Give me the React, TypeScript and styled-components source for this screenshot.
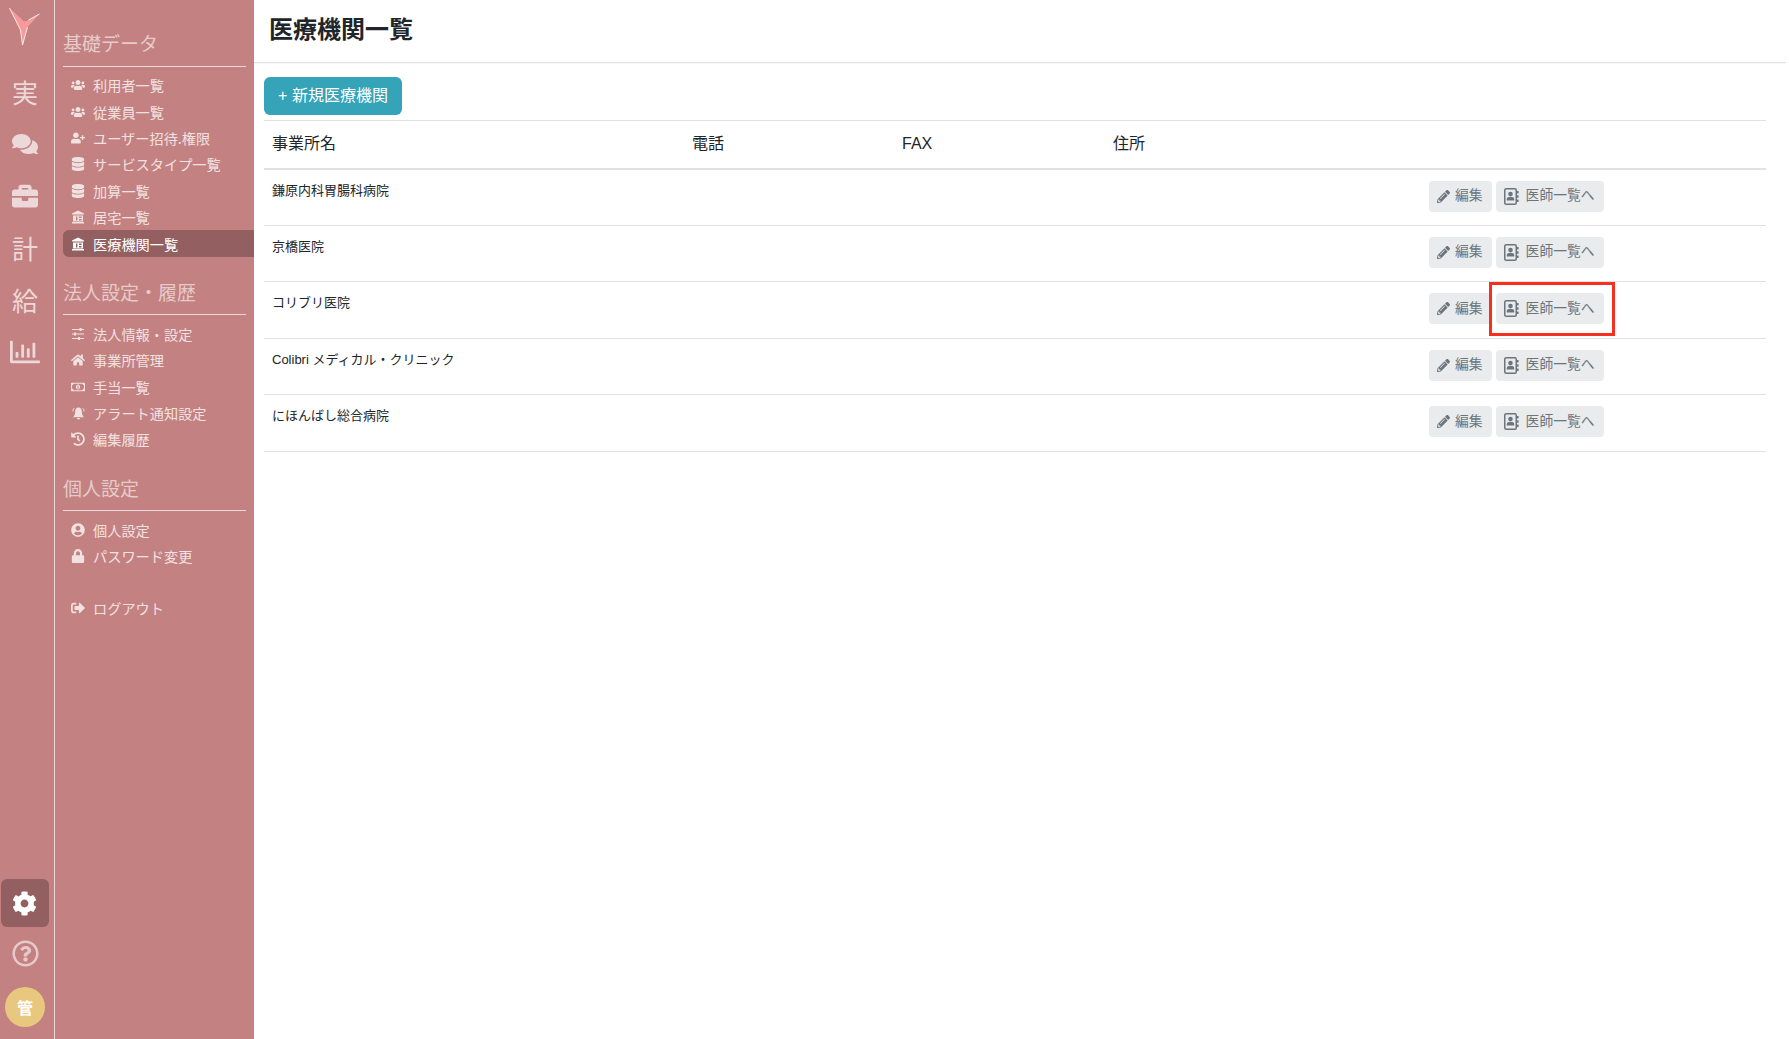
import React from "react";
import styled, { createGlobalStyle } from "styled-components";
import {
  FaUsers, FaUserPlus, FaDatabase, FaHome, FaRegMoneyBillAlt, FaHistory,
  FaUserCircle, FaLock, FaSignOutAlt, FaComments, FaBriefcase, FaCog, FaRegQuestionCircle, FaPencilAlt, FaRegChartBar,
} from "react-icons/fa";

const Global = createGlobalStyle`
  html, body { margin: 0; padding: 0; background: #fff; }
  body { font-family: "Liberation Sans", "Noto Sans CJK JP", sans-serif; color: #212529; }
  * { box-sizing: border-box; }
`;

const Page = styled.div`display: flex; width: 1789px; height: 1039px; overflow: hidden;`;

const Rail = styled.nav`
  width: 55px; flex: none; background: #c48181; border-right: 1px solid #ead7d7; padding-right: 4px;
  display: flex; flex-direction: column; align-items: center; color: #ecd8d8;
`;
const Logo = styled.svg`width: 34px; height: 40px; margin: 7px 0 19px; flex: none;`;
const RailChar = styled.div`height: 52px; font-size: 26px; line-height: 52px; font-family: "Noto Sans CJK JP", sans-serif; font-weight: 400; width: 100%; text-align: center;`;
const RailIcon = styled.div`height: 52px; width: 100%; display: flex; align-items: center; justify-content: center; font-size: 26px;`;
const RailBottom = styled.div`margin-top: auto; display: flex; flex-direction: column; align-items: center; padding-bottom: 12px; width: 100%;`;
const GearBox = styled.div`
  width: 48px; height: 48px; border-radius: 6px; background: #935f60; color: #fff; flex: none;
  display: flex; align-items: center; justify-content: center; font-size: 25px; margin-right: 1px;
`;
const Help = styled.div`height: 50px; margin-top: 1px; display: flex; align-items: center; font-size: 27px; color: #e6c9c9;`;
const Avatar = styled.div`
  width: 40px; height: 40px; border-radius: 50%; background: #e8c77f; color: #fff; margin-top: 9px; flex: none;
  display: flex; align-items: center; justify-content: center; font-size: 16px; font-weight: 700; font-family: "Noto Sans CJK JP", sans-serif;
`;

const Side = styled.aside`width: 199px; flex: none; background: #c48181; padding: 30px 0 0 8px; color: #f1e2e2;`;
const SectionTitle = styled.div`
  margin-right: 8px; height: 36.5px; border-bottom: 1px solid #ecd9d9;
  font-size: 19px; line-height: 26px; color: #e6cbcb; font-family: "Noto Sans CJK JP", sans-serif;
`;
const Section = styled.section`margin-bottom: 22px;`;
const MenuList = styled.ul`list-style: none; margin: 5.5px 0 0; padding: 0;`;
const MenuItem = styled.li<{ $active?: boolean }>`
  height: 26.4px; display: flex; align-items: center; padding-left: 6px; font-size: 14.2px;
  font-family: "Noto Sans CJK JP", sans-serif; font-weight: 400;
  border-radius: 6px 0 0 6px;
  background: ${(p) => (p.$active ? "#935f60" : "transparent")};
  color: ${(p) => (p.$active ? "#fff" : "#f1e2e2")};
`;
const MenuIcon = styled.span`width: 18px; margin-right: 6px; display: flex; justify-content: center; font-size: 14px;`;
const Logout = styled.ul`list-style: none; margin: 25px 0 0; padding: 0;`;

const Main = styled.main`flex: 1; min-width: 0; display: flex; flex-direction: column; padding-right: 3px;`;
const Header = styled.header`height: 63px; flex: none; border-bottom: 1px solid #dfe1e3; padding: 13px 15px; box-shadow: 0 1px 1px rgba(0,0,0,.03);`;
const Title = styled.h1`margin: 0; font-size: 24px; line-height: 34px; font-weight: 700; color: #212529;`;
const Content = styled.div`padding: 14px 20px 0 10px;`;
const NewButton = styled.button`
  display: block; width: 138px; height: 38px; border: 0; border-radius: 6px; background: #35a3b8; color: #fff;
  font-size: 16px; line-height: 22px; font-family: "Liberation Sans", "Noto Sans CJK JP", sans-serif; padding: 0;
`;
const Table = styled.table`width: 100%; margin-top: 5px; border-collapse: collapse; table-layout: fixed;`;
const Th = styled.th<{ $w: number }>`
  width: ${(p) => p.$w}px; height: 48px; padding: 0 8px; text-align: left; font-weight: 400; font-size: 16px; line-height: 22px;
  color: #212529; border-top: 1px solid #dee2e6; border-bottom: 2px solid #dee2e6; vertical-align: middle;
`;
const Td = styled.td`height: 56.5px; padding: 11px 8px 0; vertical-align: top; font-size: 13px; line-height: 19px; border-bottom: 1px solid #dee2e6; color: #212529;`;
const Actions = styled.div`display: flex; gap: 4px;`;
const ActionButton = styled.button<{ $gap: number }>`
  position: relative; height: 31px; padding: 0 9px 0 8px; border: 0; border-radius: 4px; background: #e9ebec; color: #6c757d;
  font-size: 13.8px; line-height: 20px; display: flex; align-items: center; gap: ${(p) => p.$gap}px; font-family: "Liberation Sans", "Noto Sans CJK JP", sans-serif;
`;
const Highlight = styled.span`position: absolute; left: -7px; right: -11px; top: -11px; bottom: -12px; border: 3px solid #f5301e;`;

const SlidersIcon = () => (
  <svg width="14" height="14" viewBox="0 0 14 14" fill="currentColor">
    <path d="M1 2.5h12M1 7h12M1 11.5h12" stroke="currentColor" strokeWidth="1" />
    <rect x="8.5" y="1" width="2" height="3" />
    <rect x="3" y="5.5" width="2" height="3" />
    <rect x="7" y="10" width="2" height="3" />
  </svg>
);
const BankIcon = () => (
  <svg width="14" height="14" viewBox="0 0 14 14" fill="currentColor">
    <path d="M7 .5 13 3.5V4.6H1V3.5Z" />
    <path fillRule="evenodd" d="M2 5.5h10v6H2ZM5 6.5v4h1.4v-4ZM8 6.5v1.4h2.6V6.5ZM8 8.9v1.6h2.6V8.9Z" />
    <rect x="1" y="12" width="12" height="1.5" />
  </svg>
);
const BellIcon = () => (
  <svg width="15" height="15" viewBox="0 0 15 15" fill="currentColor">
    <path d="M7.5 1.5C5.2 1.5 4.2 3.4 4.2 5.4 4.2 8.4 3.2 10 2 11.2H13C11.8 10 10.8 8.4 10.8 5.4 10.8 3.4 9.8 1.5 7.5 1.5ZM6 12h3a1.5 1.5 0 0 1-3 0Z" />
    <path d="M1.8 5.5C1.8 4 2.4 3 3.2 2.2M13.2 5.5C13.2 4 12.6 3 11.8 2.2" fill="none" stroke="currentColor" strokeWidth="1" />
  </svg>
);
const AddressIcon = () => (
  <svg width="15" height="17" viewBox="0 0 15 17" fill="currentColor">
    <rect x=".75" y=".75" width="11.5" height="15.5" rx="1.5" fill="none" stroke="currentColor" strokeWidth="1.5" />
    <circle cx="6.5" cy="6" r="2.3" />
    <path d="M2.8 12.5v-1.3C2.8 9.6 4.4 8.8 6.5 8.8s3.7.8 3.7 2.4v1.3Z" />
    <rect x="13" y="3" width="1.6" height="2.4" />
    <rect x="13" y="7.3" width="1.6" height="2.4" />
    <rect x="13" y="11.6" width="1.6" height="2.4" />
  </svg>
);

const group1 = [
  [FaUsers, "利用者一覧"], [FaUsers, "従業員一覧"], [FaUserPlus, "ユーザー招待.権限"], [FaDatabase, "サービスタイプ一覧"],
  [FaDatabase, "加算一覧"], [BankIcon, "居宅一覧"], [BankIcon, "医療機関一覧"],
] as const;
const group2 = [
  [SlidersIcon, "法人情報・設定"], [FaHome, "事業所管理"], [FaRegMoneyBillAlt, "手当一覧"], [BellIcon, "アラート通知設定"], [FaHistory, "編集履歴"],
] as const;
const group3 = [[FaUserCircle, "個人設定"], [FaLock, "パスワード変更"]] as const;
const rows = ["鎌原内科胃腸科病院", "京橋医院", "コリブリ医院", "Colibri メディカル・クリニック", "にほんばし総合病院"];

function Menu({ items, active }: { items: readonly (readonly [React.ComponentType, string])[]; active?: string }) {
  return (
    <MenuList>
      {items.map(([Icon, label]) => (
        <MenuItem key={label} $active={label === active}>
          <MenuIcon><Icon /></MenuIcon>
          {label}
        </MenuItem>
      ))}
    </MenuList>
  );
}

export default function App() {
  return (
    <Page>
      <Global />
      <Rail>
        <Logo viewBox="0 0 34 40">
          <path d="M1.5 1 L15.5 14 Q18 15 20.5 13 L31.5 7 L19.5 20 L14.5 38 L12.5 23 Z" fill="#f89a9c" />
          <path d="M1.5 1 L12.5 23 L14.5 38 L19.5 20 M20.5 13 L31.5 7" stroke="#fbe9e9" strokeWidth="1" fill="none" />
        </Logo>
        <RailChar>実</RailChar>
        <RailIcon><FaComments /></RailIcon>
        <RailIcon><FaBriefcase /></RailIcon>
        <RailChar>計</RailChar>
        <RailChar>給</RailChar>
        <RailIcon><FaRegChartBar size={30} /></RailIcon>
        <RailBottom>
          <GearBox><FaCog /></GearBox>
          <Help><FaRegQuestionCircle /></Help>
          <Avatar>管</Avatar>
        </RailBottom>
      </Rail>
      <Side>
        <Section>
          <SectionTitle>基礎データ</SectionTitle>
          <Menu items={group1} active="医療機関一覧" />
        </Section>
        <Section>
          <SectionTitle>法人設定・履歴</SectionTitle>
          <Menu items={group2} />
        </Section>
        <Section>
          <SectionTitle>個人設定</SectionTitle>
          <Menu items={group3} />
          <Logout>
            <MenuItem><MenuIcon><FaSignOutAlt /></MenuIcon>ログアウト</MenuItem>
          </Logout>
        </Section>
      </Side>
      <Main>
        <Header><Title>医療機関一覧</Title></Header>
        <Content>
          <NewButton>+ 新規医療機関</NewButton>
          <Table>
            <thead>
              <tr>
                <Th $w={420}>事業所名</Th>
                <Th $w={210}>電話</Th>
                <Th $w={211}>FAX</Th>
                <Th $w={316}>住所</Th>
                <Th $w={345} />
              </tr>
            </thead>
            <tbody>
              {rows.map((name, i) => (
                <tr key={name}>
                  <Td>{name}</Td>
                  <Td />
                  <Td />
                  <Td />
                  <Td>
                    <Actions>
                      <ActionButton $gap={5}><FaPencilAlt size={13} />編集</ActionButton>
                      <ActionButton $gap={7}>
                        <AddressIcon />医師一覧へ
                        {i === 2 && <Highlight />}
                      </ActionButton>
                    </Actions>
                  </Td>
                </tr>
              ))}
            </tbody>
          </Table>
        </Content>
      </Main>
    </Page>
  );
}
